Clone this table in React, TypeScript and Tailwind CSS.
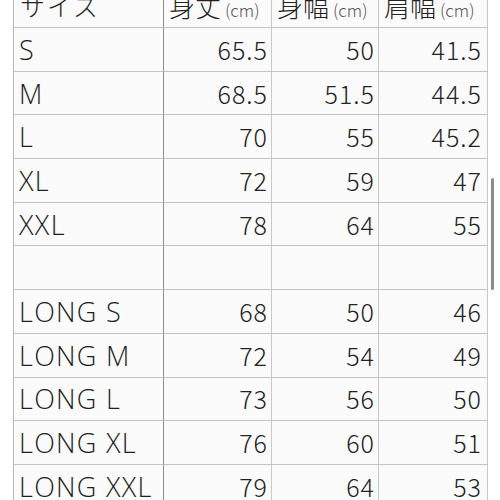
const rows: [string, string, string, string][] = [
  ["S", "65.5", "50", "41.5"],
  ["M", "68.5", "51.5", "44.5"],
  ["L", "70", "55", "45.2"],
  ["XL", "72", "59", "47"],
  ["XXL", "78", "64", "55"],
  ["", "", "", ""],
  ["LONG S", "68", "50", "46"],
  ["LONG M", "72", "54", "49"],
  ["LONG L", "73", "56", "50"],
  ["LONG XL", "76", "60", "51"],
  ["LONG XXL", "79", "64", "53"],
];

const font = { fontFamily: '"Noto Sans CJK JP", "Noto Sans", sans-serif' };
const latin = { fontFamily: '"Open Sans", "Noto Sans", sans-serif' };

function Head({ label, first }: { label: string; first?: boolean }) {
  return (
    <div
      className={`flex h-[44px] items-baseline border-b border-[#c4c4c4] pt-[9px] leading-none text-[#222] ${
        first
          ? "border-r border-r-[#8e8e8e] pl-[6px] text-[25px] tracking-[2px]"
          : "border-r border-r-[#c8c8c8] pl-[5px] text-[26px]"
      }`}
    >
      <span>{label}</span>
      {!first && <span className="ml-[4px] text-[17px] text-[#555]">(cm)</span>}
    </div>
  );
}

export default function App() {
  return (
    <div className="relative h-[500px] w-[500px] overflow-hidden bg-white" style={font}>
      <div className="ml-[13px] -mt-[16px] grid w-[474px] grid-cols-[150px_108px_107px_109px] border-l border-[#b8b8b8] bg-[#fbfbfb] font-light">
        <Head label="サイズ" first />
        <Head label="身丈" />
        <Head label="身幅" />
        <Head label="肩幅" />
        {rows.map((r, i) => (
          <div key={i} className="contents">
            <div
              className="flex h-[43.7px] items-center border-b border-r border-[#c4c4c4] border-r-[#8e8e8e] pl-[5px] text-[27px] font-light leading-none tracking-[1.3px] text-[#1e1e1e]"
              style={latin}
            >
              {r[0]}
            </div>
            {r.slice(1).map((v, j) => (
              <div
                key={j}
                className={`flex h-[43.7px] items-center justify-end border-b border-r border-[#c4c4c4] border-r-[#c8c8c8] text-[25px] leading-none tracking-[1px] text-[#222] ${
                  j === 2 ? "pr-[5px]" : "pr-[3px]"
                }`}
              >
                {v}
              </div>
            ))}
          </div>
        ))}
      </div>
      <div className="absolute left-[491px] top-[178px] h-[112px] w-[3px] rounded-full bg-[#8c8c8c]" />
    </div>
  );
}
